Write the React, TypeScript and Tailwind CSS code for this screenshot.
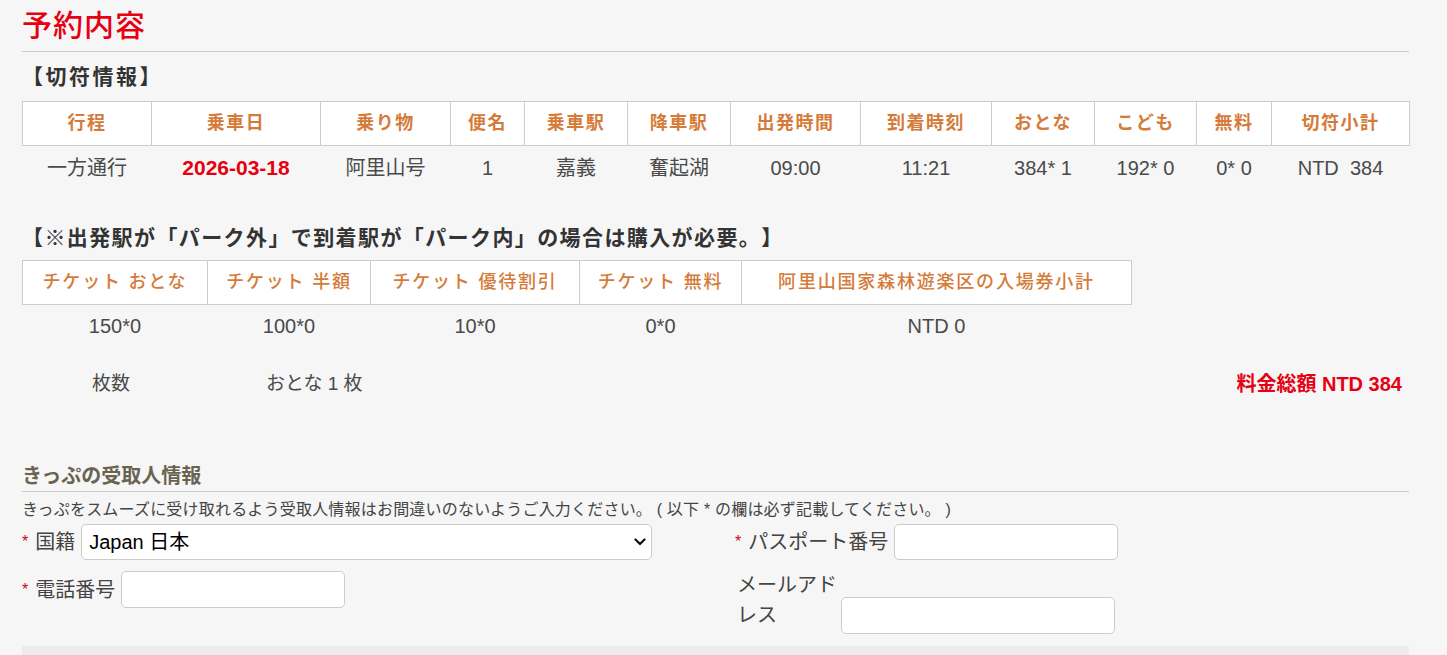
import React from "react";

const font = "font-['Liberation_Sans','Noto_Sans_CJK_JP',sans-serif]";

const ticketCols = [
  { label: "行程", w: 129 },
  { label: "乗車日", w: 169 },
  { label: "乗り物", w: 130 },
  { label: "便名", w: 74 },
  { label: "乗車駅", w: 103 },
  { label: "降車駅", w: 103 },
  { label: "出発時間", w: 130 },
  { label: "到着時刻", w: 131 },
  { label: "おとな", w: 103 },
  { label: "こども", w: 102 },
  { label: "無料", w: 75 },
  { label: "切符小計", w: 138 },
];

const ticketRow = ["一方通行", "2026-03-18", "阿里山号", "1", "嘉義", "奮起湖", "09:00", "11:21", "384* 1", "192* 0", "0* 0", "NTD  384"];

const parkCols = [
  { label: "チケット おとな", w: 185 },
  { label: "チケット 半額", w: 163 },
  { label: "チケット 優待割引", w: 209 },
  { label: "チケット 無料", w: 162 },
  { label: "阿里山国家森林遊楽区の入場券小計", w: 390 },
];

const parkRow = ["150*0", "100*0", "10*0", "0*0", "NTD 0"];

const Star = () => <span className="text-[#d0021b] text-[16px] align-top mr-[7px]">*</span>;

const Chevron = () => (
  <svg width="12" height="8" viewBox="0 0 12 8" className="absolute right-[6px] top-[14px]">
    <path d="M1.5 1.5 L6 6 L10.5 1.5" fill="none" stroke="#111" strokeWidth="2.2" strokeLinecap="round" strokeLinejoin="round" />
  </svg>
);

export default function App() {
  return (
    <div className={`min-h-screen bg-[#f6f6f6] ${font} overflow-hidden [text-spacing-trim:space-all]`}>
      <div className="ml-[22px] w-[1387px]">
        <h1 className="mt-[8px] pb-[7px] border-b border-[#cccccc] text-[30px] leading-[36px] font-medium text-[#e60012] tracking-[1px]">予約内容</h1>

        <h2 className="mt-[10px] mb-[9px] text-[21px] leading-[30px] font-semibold tracking-[2.5px] text-[#333]">【切符情報】</h2>
        <table className="table-fixed border-collapse w-[1387px]">
          <colgroup>
            {ticketCols.map((c) => (
              <col key={c.label} style={{ width: c.w }} />
            ))}
          </colgroup>
          <thead>
            <tr className="h-[44px] bg-white">
              {ticketCols.map((c) => (
                <th key={c.label} className="border border-[#cccccc] text-[18px] tracking-[1.5px] font-semibold text-[#d57b3a]">
                  {c.label}
                </th>
              ))}
            </tr>
          </thead>
          <tbody>
            <tr className="h-[44px]">
              {ticketRow.map((v, i) => (
                <td
                  key={i}
                  className={
                    i === 1
                      ? "text-center text-[21px] font-bold text-[#e60012]"
                      : "text-center text-[20px] text-[#4a4a4a] whitespace-pre"
                  }
                >
                  {v}
                </td>
              ))}
            </tr>
          </tbody>
        </table>

        <h2 className="mt-[33px] mb-[7px] text-[21px] leading-[30px] font-semibold tracking-[1.4px] text-[#333]">
          【※出発駅が「パーク外」で到着駅が「パーク内」の場合は購入が必要。】
        </h2>
        <table className="table-fixed border-collapse w-[1109px]">
          <colgroup>
            {parkCols.map((c) => (
              <col key={c.label} style={{ width: c.w }} />
            ))}
          </colgroup>
          <thead>
            <tr className="h-[44px] bg-white">
              {parkCols.map((c) => (
                <th key={c.label} className="border border-[#cccccc] text-[18px] tracking-[1.8px] font-medium text-[#d57b3a]">
                  {c.label}
                </th>
              ))}
            </tr>
          </thead>
          <tbody>
            <tr className="h-[44px]">
              {parkRow.map((v, i) => (
                <td key={i} className="text-center text-[20px] text-[#4a4a4a]">
                  {v}
                </td>
              ))}
            </tr>
          </tbody>
        </table>

        <div className="mt-[21px] flex items-center h-[30px] text-[19px] text-[#4a4a4a]">
          <span className="ml-[70px]">枚数</span>
          <span className="ml-[136px]">おとな 1 枚</span>
          <span className="ml-auto mr-[7px] font-bold text-[20px] text-[#e60012]">料金総額 NTD 384</span>
        </div>

        <h3 className="mt-[63px] border-b border-[#cccccc] text-[20px] leading-[29px] font-bold text-[#6b6352] font-['Liberation_Serif','Noto_Sans_CJK_JP',serif]">
          きっぷの受取人情報
        </h3>
        <p className="mt-[8px] text-[16px] leading-[20px] tracking-[0.2px] text-[#444] whitespace-pre">
          きっぷをスムーズに受け取れるよう受取人情報はお間違いのないようご入力ください。 ( 以下 * の欄は必ず記載してください。 )
        </p>

        <div className="mt-[4px] grid grid-cols-[713px_1fr] text-[20px] text-[#444]">
          <div>
            <div className="flex items-center h-[36px]">
              <Star />
              <span className="mr-[6px]">国籍</span>
              <div className="relative">
                <select className="appearance-none w-[571px] h-[36px] rounded-[5px] border border-[#cccccc] bg-white pl-[7px] text-[20px] text-black outline-none">
                  <option>Japan 日本</option>
                </select>
                <Chevron />
              </div>
            </div>
            <div className="mt-[11px] flex items-center h-[37px]">
              <Star />
              <span className="mr-[6px]">電話番号</span>
              <input className="w-[224px] h-[37px] rounded-[5px] border border-[#cccccc] bg-white outline-none" />
            </div>
          </div>
          <div>
            <div className="flex items-center h-[36px]">
              <Star />
              <span className="mr-[6px]">パスポート番号</span>
              <input className="w-[224px] h-[36px] rounded-[5px] border border-[#cccccc] bg-white outline-none" />
            </div>
            <div className="mt-[10px] flex items-start">
              <span className="ml-[2px] w-[100px] leading-[30px]">メールアドレス</span>
              <input className="ml-[4px] mt-[27px] w-[274px] h-[37px] rounded-[5px] border border-[#cccccc] bg-white outline-none" />
            </div>
          </div>
        </div>

        <div className="mt-[12px] h-[40px] bg-[#ececec]" />
      </div>
    </div>
  );
}
